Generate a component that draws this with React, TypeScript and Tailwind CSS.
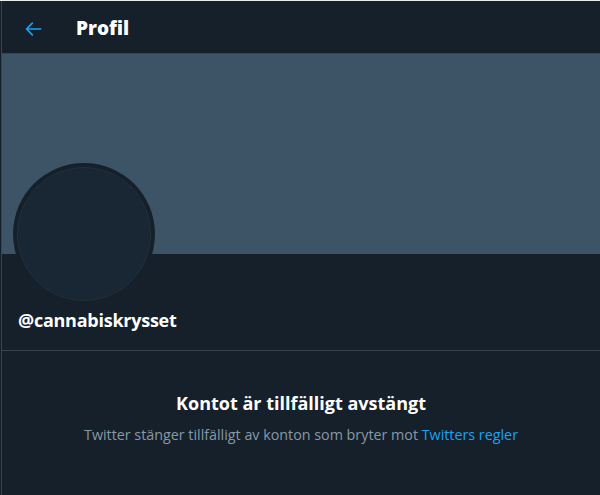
import React from "react";

export default function App() {
  return (
    <div
      className="w-[600px] h-[495px] bg-[#15202b] border-t border-[#e6ecf0] overflow-hidden"
      style={{ fontFamily: '"Open Sans", "Noto Sans", sans-serif' }}
    >
      <div className="ml-px h-full border-l border-[#38444d] flex flex-col">
        <div className="h-[53px] flex items-center border-b border-[#38444d] shrink-0 pt-[3px]">
          <div className="w-[74px] pl-[22px] flex items-center">
            <svg width="20" height="20" viewBox="0 0 24 24" fill="none" stroke="#1da1f2" strokeWidth="2" strokeLinecap="round" strokeLinejoin="round">
              <path d="M20 12H4" />
              <path d="M10 5l-7 7 7 7" />
            </svg>
          </div>
          <span className="text-white text-[19px] font-extrabold leading-none">Profil</span>
        </div>
        <div className="h-[200px] bg-[#3d5466] shrink-0"></div>
        <div className="relative h-[96px] shrink-0 px-4">
          <div className="absolute left-[11px] top-[-91px] w-[142px] h-[142px] rounded-full bg-[#15202b] p-[4px]">
            <div className="w-full h-full rounded-full bg-[#192734] border border-[#22303c]"></div>
          </div>
          <div className="pt-[54px] text-white text-[18px] tracking-[-0.25px] font-bold leading-[24px]">@cannabiskrysset</div>
        </div>
        <div className="border-t border-[#38444d]"></div>
        <div className="flex flex-col items-center pt-[39px]">
          <div className="text-white text-[18px] font-bold leading-[26px]">Kontot är tillfälligt avstängt</div>
          <div className="mt-[9px] text-[#8899a6] text-[14.3px] leading-[20px]">
            Twitter stänger tillfälligt av konton som bryter mot <span className="text-[#1da1f2]">Twitters regler</span>
          </div>
        </div>
      </div>
    </div>
  );
}
